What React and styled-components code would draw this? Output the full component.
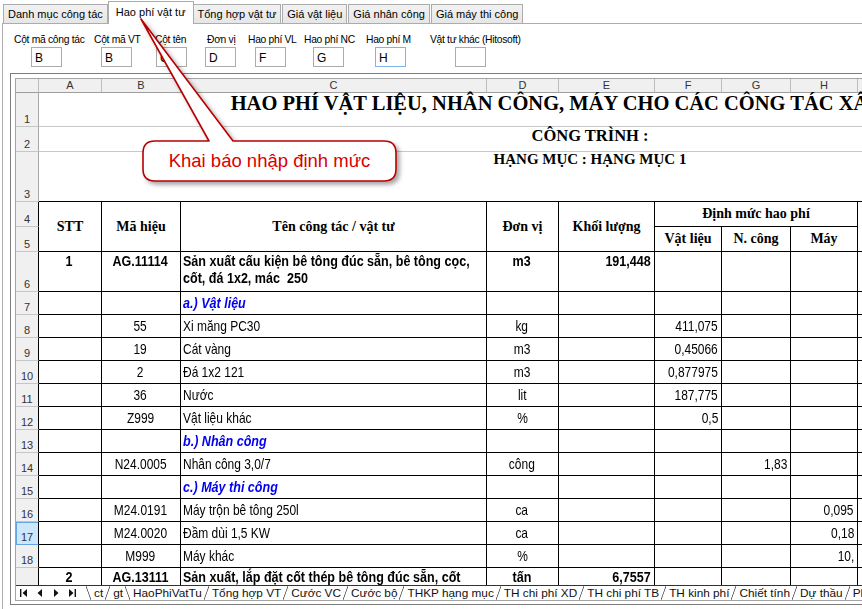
import React from "react";
import styled, { createGlobalStyle } from "styled-components";

const sans = `"Liberation Sans", Arial, sans-serif`;
const serif = `"Liberation Serif", "Times New Roman", serif`;

const GlobalStyle = createGlobalStyle`
  html, body {
    margin: 0;
    padding: 0;
    background: #fff;
    overflow: hidden;
  }
`;

const topTabs = [
  "Danh mục công tác",
  "Hao phí vật tư",
  "Tổng hợp vật tư",
  "Giá vật liệu",
  "Giá nhân công",
  "Giá máy thi công",
];

const fields = [
  { label: "Cột mã công tác", value: "B", w: 80, ix: 17 },
  { label: "Cột mã VT", value: "B", w: 61, ix: 7 },
  { label: "Cột tên", value: "C", w: 50, ix: 1 },
  { label: "Đơn vị", value: "D", w: 43, lx: 2, ix: 0 },
  { label: "Hao phí VL", value: "F", w: 56, ix: 7 },
  { label: "Hao phí NC", value: "G", w: 62, ix: 9 },
  { label: "Hao phí M", value: "H", w: 64, ix: 9, focus: true },
  { label: "Vật tư khác (Hitosoft)", value: "", w: 120, ix: 25 },
];

const colLetters = ["A", "B", "C", "D", "E", "F", "G", "H", "I"];

const rows = [
  {
    n: 6,
    top: true,
    bold: true,
    A: "1",
    B: "AG.11114",
    C: "Sản xuất cấu kiện bê tông đúc sẵn, bê tông cọc,\ncốt, đá 1x2, mác  250",
    D: "m3",
    E: "191,448",
  },
  { n: 7, sec: "a.) Vật liệu" },
  { n: 8, B: "55", C: "Xi măng PC30", D: "kg", F: "411,075" },
  { n: 9, B: "19", C: "Cát vàng", D: "m3", F: "0,45066" },
  { n: 10, B: "2", C: "Đá 1x2 121", D: "m3", F: "0,877975" },
  { n: 11, B: "36", C: "Nước", D: "lit", F: "187,775" },
  { n: 12, B: "Z999", C: "Vật liệu khác", D: "%", F: "0,5" },
  { n: 13, sec: "b.) Nhân công" },
  { n: 14, B: "N24.0005", C: "Nhân công 3,0/7", D: "công", G: "1,83" },
  { n: 15, sec: "c.) Máy thi công" },
  { n: 16, B: "M24.0191", C: "Máy trộn bê tông 250l", D: "ca", H: "0,095" },
  { n: 17, B: "M24.0020", C: "Đầm dùi 1,5 KW", D: "ca", H: "0,18", sel: true },
  { n: 18, B: "M999", C: "Máy khác", D: "%", H: "10," },
  {
    n: 19,
    top: true,
    bold: true,
    A: "2",
    B: "AG.13111",
    C: "Sản xuất, lắp đặt cốt thép bê tông đúc sẵn, cốt",
    D: "tấn",
    E: "6,7557",
  },
];

const sheetTabs = [
  "ct",
  "gt",
  "HaoPhiVatTu",
  "Tổng hợp VT",
  "Cước VC",
  "Cước bộ",
  "THKP hạng mục",
  "TH chi phí XD",
  "TH chi phí TB",
  "TH kinh phí",
  "Chiết tính",
  "Dự thầu",
  "Phụ lục",
];

// one data cell; text is set in a narrow face (Arial Narrow look)
const DataCell = ({ al = "l", top, bold, italic, blue, children }) => (
  <Cell $al={al} $top={top}>
    {children ? (
      <Txt $al={al} $b={bold} $i={italic} $blue={blue}>
        {children}
      </Txt>
    ) : null}
  </Cell>
);

export default function App() {
  return (
    <Root>
      <GlobalStyle />
      <TopTabs>
        {topTabs.map((t, i) => (
          <TopTab key={t} $active={i === 1}>
            {t}
          </TopTab>
        ))}
      </TopTabs>

      <Panel>
        <ParamRow>
          {fields.map((f) => (
            <Field key={f.label} $w={f.w}>
              <FieldLabel $lx={f.lx || 0}>{f.label}</FieldLabel>
              <FieldInput $ix={f.ix} $focus={f.focus} readOnly value={f.value} />
            </Field>
          ))}
        </ParamRow>

        <SheetFrame>
          <SheetInner>
            <SheetGrid>
              <ColHead />
              {colLetters.map((c) => (
                <ColHead key={c}>{c}</ColHead>
              ))}

              <RowHead>1</RowHead>
              <Banner $size={20.5} $lh={20}>
                HAO PHÍ VẬT LIỆU, NHÂN CÔNG, MÁY CHO CÁC CÔNG TÁC XÂY DỰNG
              </Banner>
              <RowHead>2</RowHead>
              <Banner $size={16.5} $lh={17}>
                CÔNG TRÌNH :
              </Banner>
              <RowHead>3</RowHead>
              <Banner $size={15} $lh={15} $dark>
                HẠNG MỤC : HẠNG MỤC 1
              </Banner>

              <RowHead $tbl>4</RowHead>
              <HeadCell $rs={2}>STT</HeadCell>
              <HeadCell $rs={2}>Mã hiệu</HeadCell>
              <HeadCell $rs={2}>Tên công tác / vật tư</HeadCell>
              <HeadCell $rs={2}>Đơn vị</HeadCell>
              <HeadCell $rs={2}>Khối lượng</HeadCell>
              <HeadCell $cs={3}>Định mức hao phí</HeadCell>
              <HeadCell $rs={2} />
              <RowHead $tbl>5</RowHead>
              <HeadCell>Vật liệu</HeadCell>
              <HeadCell>N. công</HeadCell>
              <HeadCell>Máy</HeadCell>

              {rows.map((r) => (
                <React.Fragment key={r.n}>
                  <RowHead $tbl $sel={r.sel}>
                    {r.n}
                  </RowHead>
                  <DataCell al="c" top={r.top} bold={r.bold}>{r.A}</DataCell>
                  <DataCell al="c" top={r.top} bold={r.bold}>{r.B}</DataCell>
                  {r.sec ? (
                    <DataCell bold italic blue>
                      {r.sec}
                    </DataCell>
                  ) : (
                    <DataCell top={r.top} bold={r.bold}>{r.C}</DataCell>
                  )}
                  <DataCell al="c" top={r.top} bold={r.bold}>{r.D}</DataCell>
                  <DataCell al="r" top={r.top} bold={r.bold}>{r.E}</DataCell>
                  <DataCell al="r" top={r.top}>{r.F}</DataCell>
                  <DataCell al="r" top={r.top}>{r.G}</DataCell>
                  <DataCell al="r" top={r.top}>{r.H}</DataCell>
                  <DataCell />
                </React.Fragment>
              ))}
            </SheetGrid>

            <SheetTabsBar>
              <Nav>
                <NavBtn>
                  <svg width="8" height="8" viewBox="0 0 8 8">
                    <rect x="0" y="0" width="1.4" height="8" fill="#111" />
                    <path d="M7 0 L2.5 4 L7 8 Z" fill="#111" />
                  </svg>
                </NavBtn>
                <NavBtn>
                  <svg width="6" height="8" viewBox="0 0 6 8">
                    <path d="M5 0 L0.5 4 L5 8 Z" fill="#111" />
                  </svg>
                </NavBtn>
                <NavBtn>
                  <svg width="6" height="8" viewBox="0 0 6 8">
                    <path d="M1 0 L5.5 4 L1 8 Z" fill="#111" />
                  </svg>
                </NavBtn>
                <NavBtn>
                  <svg width="8" height="8" viewBox="0 0 8 8">
                    <path d="M1 0 L5.5 4 L1 8 Z" fill="#111" />
                    <rect x="6.6" y="0" width="1.4" height="8" fill="#111" />
                  </svg>
                </NavBtn>
              </Nav>
              <Sep $back />
              {sheetTabs.map((t, i) => (
                <React.Fragment key={t}>
                  <SheetTab $active={i === 2}>{t}</SheetTab>
                  <Sep $back={i === 1} />
                </React.Fragment>
              ))}
            </SheetTabsBar>
          </SheetInner>
        </SheetFrame>
      </Panel>

      <Callout>
        <svg width="862" height="609" viewBox="0 0 862 609">
          <defs>
            <filter id="shadow" x="-10%" y="-10%" width="130%" height="140%">
              <feDropShadow dx="3" dy="3" stdDeviation="2" floodColor="#000" floodOpacity="0.35" />
            </filter>
          </defs>
          <path
            d="M155 141 L209 141 L141 19 L233 141 L384 141 Q396 141 396 153 L396 169 Q396 181 384 181 L155 181 Q143 181 143 169 L143 153 Q143 141 155 141 Z"
            fill="#fff"
            stroke="#b80000"
            strokeWidth="1.6"
            strokeLinejoin="round"
            filter="url(#shadow)"
          />
        </svg>
        <CalloutText>Khai báo nhập định mức</CalloutText>
      </Callout>
    </Root>
  );
}

const Root = styled.div`
  position: relative;
  width: 862px;
  height: 609px;
  overflow: hidden;
  background: #fff;
  display: flex;
  flex-direction: column;
  font-family: ${sans};
`;

const TopTabs = styled.div`
  display: flex;
  align-items: flex-end;
  height: 23px;
  padding-left: 3px;
  flex: none;
`;

const TopTab = styled.div`
  position: relative;
  z-index: ${(p) => (p.$active ? 2 : 1)};
  height: ${(p) => (p.$active ? 23 : 19)}px;
  margin: ${(p) => (p.$active ? "0 -1px -1px -1px" : "0 1px 0 0")};
  padding: ${(p) => (p.$active ? "0 7px 2px" : "0 4px")};
  box-sizing: border-box;
  display: flex;
  align-items: center;
  border: 1px solid #acacac;
  border-bottom: none;
  background: ${(p) => (p.$active ? "#fff" : "linear-gradient(#f2f2f2, #e6e6e6)")};
  font-size: 11px;
  color: #000;
  white-space: nowrap;
`;

const Panel = styled.div`
  flex: 1;
  margin-left: 2px;
  border-top: 1px solid #acacac;
  border-left: 1px solid #acacac;
  background: #fff;
`;

const ParamRow = styled.div`
  display: flex;
  padding: 9px 0 0 11px;
`;

const Field = styled.div`
  width: ${(p) => p.$w}px;
  flex: none;
  display: flex;
  flex-direction: column;
  align-items: flex-start;
`;

const FieldLabel = styled.div`
  margin-left: ${(p) => p.$lx}px;
  font-size: 10.3px;
  letter-spacing: -0.3px;
  line-height: 14px;
  white-space: nowrap;
  color: #000;
`;

const FieldInput = styled.input`
  margin: 0 0 0 ${(p) => p.$ix}px;
  width: 31px;
  height: 20px;
  box-sizing: border-box;
  padding: 2px 0 0 3px;
  border: 1px solid ${(p) => (p.$focus ? "#7eb4ea" : "#ababab")};
  outline: none;
  font-family: ${sans};
  font-size: 12px;
  color: #000;
  background: #fff;
`;

const SheetFrame = styled.div`
  margin: 6px 0 0 7px;
  width: 1140px;
  border: 1px solid #7d7d7d;
  padding: 4px 4px 3px 4px;
  background: #fff;
`;

const SheetInner = styled.div`
  border: 1px solid #a5a5a5;
`;

const SheetGrid = styled.div`
  display: grid;
  grid-template-columns: 23px 63px 79px 306px 72px 96px 67px 69px 67px 283px;
  grid-template-rows: 14px 34px 25px 50px 25px 25px 40px repeat(12, 23px) 40px;
  height: 506px;
  overflow: hidden;
`;

const ColHead = styled.div`
  background: #f0f0f0;
  border-right: 1px solid #bcbcbc;
  border-bottom: 1px solid #9e9e9e;
  font-family: ${sans};
  font-size: 11px;
  line-height: 13px;
  color: #333;
  text-align: center;
`;

const RowHead = styled.div`
  background: ${(p) => (p.$sel ? "#cce6fc" : "#f0f0f0")};
  border-right: 1px solid ${(p) => (p.$tbl ? "#000" : "#a8a8a8")};
  border-bottom: 1px solid ${(p) => (p.$sel ? "#64a4e2" : "#c6c6c6")};
  box-shadow: ${(p) => (p.$sel ? "inset 1px 1px 0 #64a4e2" : "none")};
  display: flex;
  align-items: flex-end;
  justify-content: center;
  padding-bottom: 1px;
  font-family: ${sans};
  font-size: 11px;
  line-height: 12px;
  color: #333;
`;

const Banner = styled.div`
  grid-column: span 9;
  border-bottom: 1px solid ${(p) => (p.$dark ? "#000" : "#c8c8c8")};
  font-family: ${serif};
  font-weight: 700;
  font-size: ${(p) => p.$size}px;
  line-height: ${(p) => p.$lh}px;
  text-align: center;
  white-space: nowrap;
  color: #000;
`;

const HeadCell = styled.div`
  grid-column: span ${(p) => p.$cs || 1};
  grid-row: span ${(p) => p.$rs || 1};
  border-right: 1px solid #000;
  border-bottom: 1px solid #000;
  display: flex;
  align-items: center;
  justify-content: center;
  font-family: ${serif};
  font-weight: 700;
  font-size: 14px;
  line-height: 16px;
  color: #000;
  white-space: nowrap;
`;

const justify = { l: "flex-start", c: "center", r: "flex-end" };
const origin = { l: "left", c: "center", r: "right" };

const Cell = styled.div`
  border-right: 1px solid #000;
  border-bottom: 1px solid #000;
  display: flex;
  align-items: ${(p) => (p.$top ? "flex-start" : "center")};
  justify-content: ${(p) => justify[p.$al]};
  padding: ${(p) => (p.$top ? "1px" : "0")} 3px 0 2px;
  overflow: hidden;
  min-width: 0;
`;

const Txt = styled.span`
  display: inline-block;
  flex: none;
  white-space: pre;
  transform: scaleX(${(p) => (p.$b ? 0.86 : 0.82)});
  transform-origin: ${(p) => origin[p.$al]} center;
  font-family: ${sans};
  font-size: 14.6px;
  line-height: 17px;
  text-align: ${(p) => origin[p.$al]};
  font-weight: ${(p) => (p.$b ? 700 : 400)};
  font-style: ${(p) => (p.$i ? "italic" : "normal")};
  color: ${(p) => (p.$blue ? "#0000f0" : "#000")};
`;

const SheetTabsBar = styled.div`
  display: flex;
  align-items: stretch;
  height: 14px;
  border-top: 1px solid #333;
  background: #fff;
  overflow: hidden;
`;

const Nav = styled.div`
  display: flex;
  width: 64px;
  margin-right: 6px;
  flex: none;
`;

const NavBtn = styled.div`
  width: 16px;
  display: flex;
  align-items: center;
  justify-content: center;
`;

const Sep = styled.span`
  flex: none;
  width: 5px;
  background: linear-gradient(
    ${(p) => (p.$back ? "to top right" : "to bottom right")},
    transparent calc(50% - 0.8px),
    #555 50%,
    transparent calc(50% + 0.8px)
  );
`;

const SheetTab = styled.span`
  flex: none;
  padding: 0 3px;
  margin-right: -1px;
  background: ${(p) => (p.$active ? "#fff" : "transparent")};
  font-family: ${sans};
  font-size: 11.8px;
  line-height: 14px;
  color: #111;
  white-space: nowrap;
`;

const Callout = styled.div`
  position: absolute;
  inset: 0;
  pointer-events: none;
  z-index: 10;

  svg {
    display: block;
  }
`;

const CalloutText = styled.div`
  position: absolute;
  left: 143px;
  top: 141px;
  width: 253px;
  height: 40px;
  display: flex;
  align-items: center;
  justify-content: center;
  font-family: ${sans};
  font-size: 18.5px;
  color: #d80000;
  white-space: nowrap;
`;
